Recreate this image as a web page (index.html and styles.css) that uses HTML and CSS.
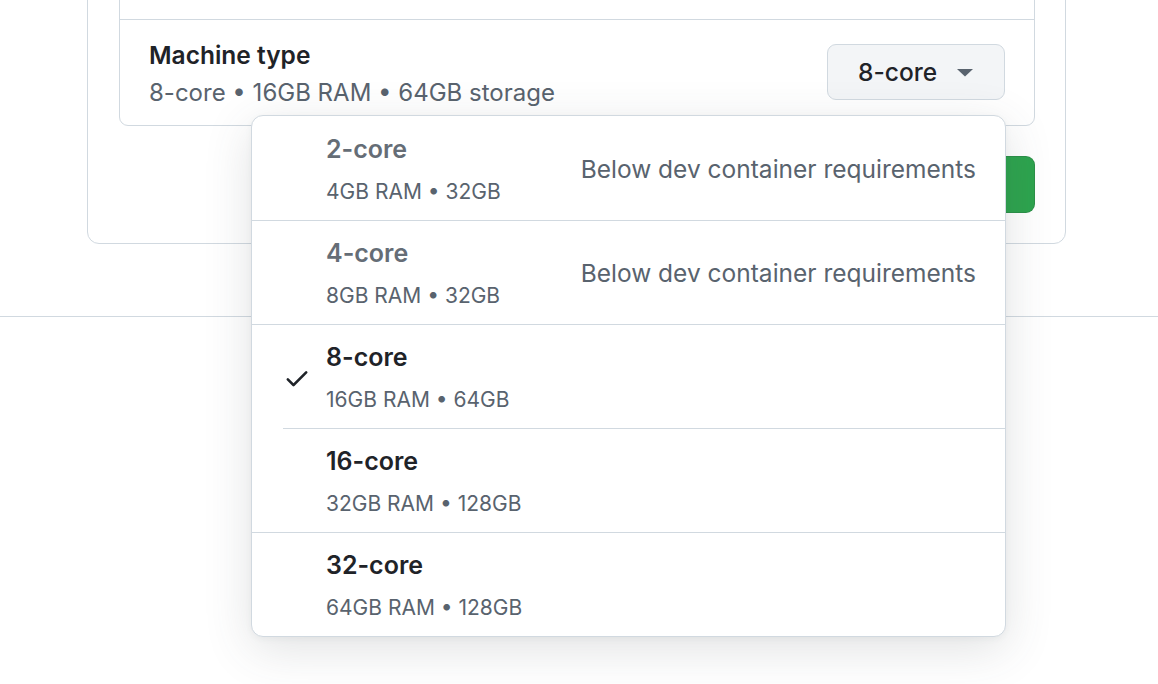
FILE: index.html
```html
<!DOCTYPE html>
<html lang="en">
<head>
<meta charset="utf-8">
<title>Machine type</title>
<link rel="stylesheet" href="styles.css">
</head>
<body>
<div class="outer-card">
  <div class="inner-card">
    <div class="prev-row"></div>
    <div class="machine-row">
      <div class="machine-info">
        <div class="machine-title">Machine type</div>
        <div class="machine-desc">8-core • 16GB RAM • 64GB storage</div>
      </div>
      <button class="select-btn" type="button">
        <span>8-core</span>
        <svg class="caret" width="16" height="8" viewBox="0 0 16 8"><path d="M0 0h16L8 7.5z" fill="#59636e"/></svg>
      </button>
    </div>
  </div>
  <div class="actions">
    <button class="create-btn" type="button" aria-label="Create codespace"></button>
  </div>
</div>
<div class="page-rule"></div>

<div class="menu">
  <div class="item disabled">
    <div class="item-main">
      <div class="item-title">2-core</div>
      <div class="item-desc">4GB RAM • 32GB</div>
    </div>
    <div class="item-note">Below dev container requirements</div>
  </div>
  <div class="item disabled">
    <div class="item-main">
      <div class="item-title">4-core</div>
      <div class="item-desc">8GB RAM • 32GB</div>
    </div>
    <div class="item-note">Below dev container requirements</div>
  </div>
  <div class="item selected">
    <svg class="check" width="28" height="28" viewBox="0 0 16 16"><path fill="#1f2328" d="M13.78 4.22a.75.75 0 0 1 0 1.06l-7.25 7.25a.75.75 0 0 1-1.06 0L2.22 9.28a.751.751 0 0 1 .018-1.042.751.751 0 0 1 1.042-.018L6 10.94l6.72-6.72a.75.75 0 0 1 1.06 0Z"/></svg>
    <div class="item-main">
      <div class="item-title">8-core</div>
      <div class="item-desc">16GB RAM • 64GB</div>
    </div>
  </div>
  <div class="item">
    <div class="item-main">
      <div class="item-title">16-core</div>
      <div class="item-desc">32GB RAM • 128GB</div>
    </div>
  </div>
  <div class="item last">
    <div class="item-main">
      <div class="item-title">32-core</div>
      <div class="item-desc">64GB RAM • 128GB</div>
    </div>
  </div>
</div>
</body>
</html>
```
FILE: styles.css
```css
* { box-sizing: border-box; }
html, body {
  margin: 0;
  padding: 0;
  background: #ffffff;
  font-family: Inter, "Noto Sans", "Liberation Sans", sans-serif;
  color: #1f2328;
  overflow: hidden;
}
body { height: 684px; position: relative; }

.outer-card {
  width: 979px;
  margin: -60px 0 0 87px;
  border: 1px solid #d1d9e0;
  border-radius: 12px;
  padding: 30px 30px 30px 31px;
}
.inner-card {
  border: 1px solid #d1d9e0;
  border-radius: 9px;
}
.prev-row {
  height: 48px;
  border-bottom: 1px solid #d1d9e0;
}
.machine-row {
  height: 105px;
  display: flex;
  align-items: center;
  justify-content: space-between;
  padding: 0 29px 0 29px;
}
.machine-info { padding-top: 3px; }
.machine-title {
  font-size: 24.5px;
  font-weight: 600;
  line-height: 37px;
  color: #1f2328;
}
.machine-desc {
  font-size: 24px;
  line-height: 37px;
  color: #59636e;
}
.select-btn {
  width: 178px;
  height: 56px;
  margin-top: -2px;
  display: flex;
  align-items: center;
  justify-content: flex-start;
  gap: 20px;
  padding: 0 0 0 30px;
  background: #f3f5f7;
  border: 1px solid #d1d9e0;
  border-radius: 9px;
  font-family: inherit;
  font-size: 24.5px;
  font-weight: 500;
  color: #1f2328;
}
.caret { display: block; margin-top: 2px; }

.actions {
  display: flex;
  justify-content: flex-end;
  margin-top: 30px;
}
.create-btn {
  width: 250px;
  height: 57px;
  background: #2da44e;
  border: 1px solid rgba(31,35,40,0.15);
  border-radius: 9px;
}
.page-rule {
  margin-top: 72px;
  border-top: 1px solid #d1d9e0;
}

.menu {
  position: absolute;
  left: 251px;
  top: 115px;
  width: 755px;
  height: 522px;
  padding-top: 1px;
  background: #ffffff;
  border: 1px solid #d1d9e0;
  border-radius: 12px;
  box-shadow: 0 12px 48px rgba(66, 74, 83, 0.16), 0 2px 6px rgba(66, 74, 83, 0.05);
  overflow: hidden;
}
.item {
  height: 104px;
  display: flex;
  align-items: center;
  justify-content: space-between;
  padding: 0 29px 0 74px;
  border-bottom: 1px solid #d1d9e0;
}
.item.last { border-bottom: none; }
.item.selected {
  margin-left: 31px;
  padding-left: 0;
  justify-content: flex-start;
}
.check {
  display: block;
  flex: none;
  margin-right: 15px;
  margin-top: 2px;
}
.item-main { padding-top: 4px; }
.item-title {
  font-size: 25px;
  font-weight: 600;
  line-height: 42px;
  color: #1f2328;
}
.item-desc {
  font-size: 21px;
  line-height: 44px;
  color: #59636e;
}
.disabled .item-title { color: #656d76; }
.item-note {
  font-size: 24.5px;
  color: #59636e;
}
```
